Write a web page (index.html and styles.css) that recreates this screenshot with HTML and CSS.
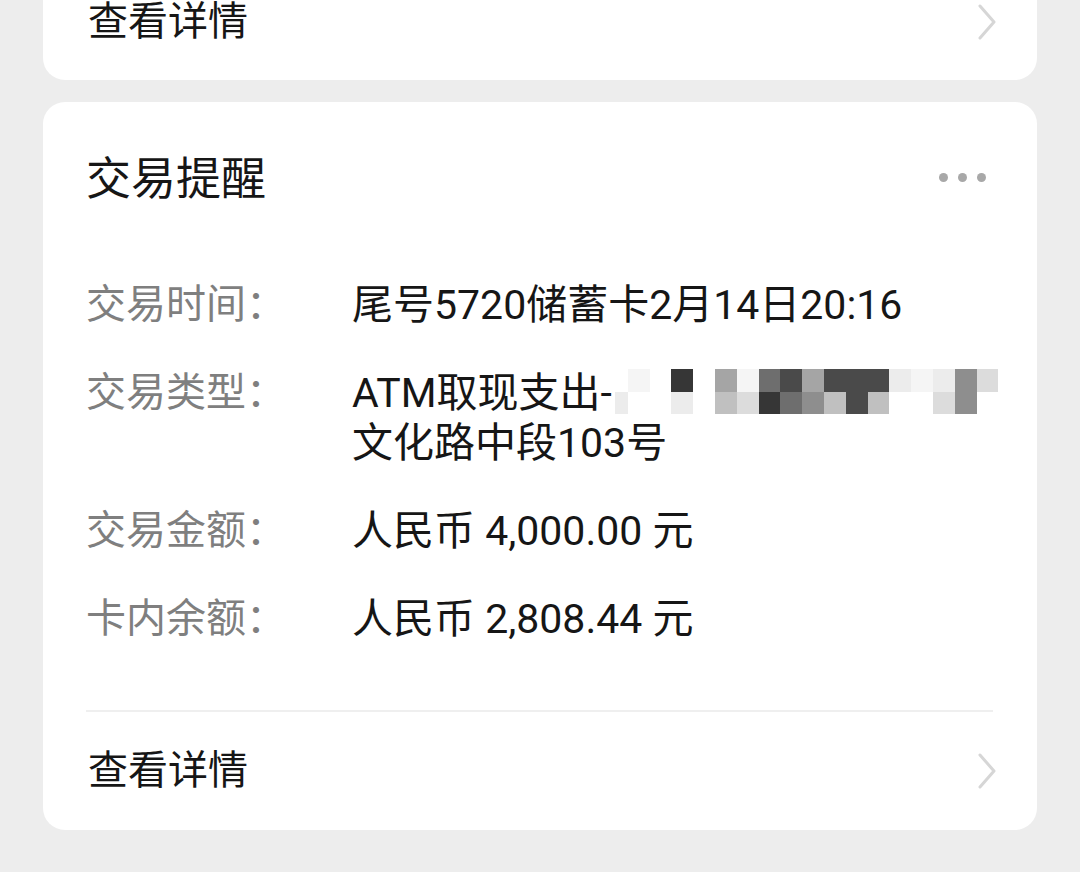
FILE: index.html
```html
<!DOCTYPE html>
<html lang="zh-CN">
<head>
<meta charset="utf-8">
<title>交易提醒</title>
<link rel="stylesheet" href="styles.css">
</head>
<body>
<div class="page">
  <section class="card card-top">
    <a class="link-row">
      <span class="link-text">查看详情</span>
      <svg class="chev" width="20" height="36" viewBox="0 0 20 36"><polyline points="3,2 17,18 3,34" fill="none" stroke="#d6d6d6" stroke-width="3" stroke-linecap="round" stroke-linejoin="round"/></svg>
    </a>
  </section>

  <section class="card">
    <header class="card-head">
      <h2 class="title">交易提醒</h2>
      <div class="more"><i></i><i></i><i></i></div>
    </header>
    <dl class="details">
      <div class="row">
        <dt>交易时间：</dt>
        <dd>尾号5720储蓄卡2月14日20:16</dd>
      </div>
      <div class="row">
        <dt>交易类型：</dt>
        <dd>
          <span class="line nowrap">ATM取现支出-<span class="mosaic">
            <b class="w"></b><b class="g1"></b><b class="w"></b><b class="g9"></b><b class="w"></b><b class="g5"></b><b class="g1"></b><b class="g7"></b><b class="g8"></b><b class="g5"></b><b class="g8"></b><b class="g8"></b><b class="g8"></b><b class="g2"></b><b class="g1"></b><b class="g2"></b><b class="g6"></b><b class="g3"></b>
            <b class="g2"></b><b class="w"></b><b class="w"></b><b class="g2"></b><b class="w"></b><b class="g4"></b><b class="g3"></b><b class="g9"></b><b class="g7"></b><b class="g6"></b><b class="g4"></b><b class="g8"></b><b class="g4"></b><b class="w"></b><b class="w"></b><b class="g3"></b><b class="g6"></b><b class="w"></b>
          </span></span>
          <span class="line">文化路中段103号</span>
        </dd>
      </div>
      <div class="row">
        <dt>交易金额：</dt>
        <dd>人民币 4,000.00 元</dd>
      </div>
      <div class="row">
        <dt>卡内余额：</dt>
        <dd>人民币 2,808.44 元</dd>
      </div>
    </dl>
    <a class="link-row bordered">
      <span class="link-text">查看详情</span>
      <svg class="chev" width="20" height="36" viewBox="0 0 20 36"><polyline points="3,2 17,18 3,34" fill="none" stroke="#d6d6d6" stroke-width="3" stroke-linecap="round" stroke-linejoin="round"/></svg>
    </a>
  </section>
</div>
</body>
</html>
```

FILE: styles.css
```css
html, body {
  margin: 0;
  padding: 0;
  background: #ededed;
}
body {
  font-family: Roboto, "Noto Sans CJK SC", sans-serif;
  color: #161616;
  width: 1080px;
  height: 872px;
  overflow: hidden;
}
.page {
  padding: 0 43px;
  margin-top: -37px;
}
.card {
  background: #fff;
  border-radius: 22px;
  padding: 0 44px 0 43px;
  margin-bottom: 22px;
}
.link-row {
  display: flex;
  align-items: center;
  justify-content: space-between;
  height: 117px;
  padding-left: 2px;
  text-decoration: none;
  color: #161616;
}
.link-row.bordered {
  border-top: 2px solid #efefef;
  height: 118px;
}
.link-text {
  font-size: 40px;
  line-height: 50px;
}
.chev {
  display: block;
  margin-right: -4px;
}
.card-head {
  display: flex;
  align-items: center;
  justify-content: space-between;
  height: 156px;
}
.title {
  margin: 0;
  font-size: 45px;
  font-weight: 400;
  line-height: 56px;
  color: #161616;
}
.more {
  display: flex;
  gap: 10px;
  margin-right: 7px;
  margin-top: -6px;
}
.more i {
  display: block;
  width: 9px;
  height: 9px;
  border-radius: 50%;
  background: #a8a8a8;
}
.details {
  margin: 0;
  padding: 22px 0 66px;
  display: flex;
  flex-direction: column;
  gap: 38px;
}
.row {
  display: grid;
  grid-template-columns: 266px 1fr;
  line-height: 50px;
}
.row dt {
  color: #7f7f7f;
  font-size: 40px;
}
.row dd {
  margin: 0;
  color: #161616;
  font-size: 41px;
}
.line {
  display: block;
  height: 50px;
}
.nowrap {
  white-space: nowrap;
}
.mosaic {
  display: inline-grid;
  grid-template-columns: 13px repeat(17, 21.8px);
  grid-template-rows: 22.5px 22.5px;
  vertical-align: top;
  margin-top: 1px;
  margin-left: 3px;
  filter: blur(0.5px);
}
.mosaic b { display: block; }
.mosaic .w { background: #fff; }
.mosaic .g1 { background: #f5f5f5; }
.mosaic .g2 { background: #ececec; }
.mosaic .g3 { background: #dcdcdc; }
.mosaic .g4 { background: #c0c0c0; }
.mosaic .g5 { background: #a5a5a5; }
.mosaic .g6 { background: #8e8e8e; }
.mosaic .g7 { background: #6e6e6e; }
.mosaic .g8 { background: #4a4a4a; }
.mosaic .g9 { background: #363636; }
```
